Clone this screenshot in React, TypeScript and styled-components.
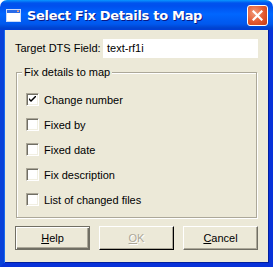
import React from "react";
import styled, { createGlobalStyle } from "styled-components";

const Global = createGlobalStyle`
  html, body { margin: 0; padding: 0; background: #fff; }
  * { box-sizing: border-box; }
`;

const Window = styled.div`
  width: 273px;
  height: 267px;
  display: flex;
  flex-direction: column;
  font-family: "Liberation Sans", Arial, sans-serif;
  font-size: 11px;
  color: #000;
`;

const TitleBar = styled.div`
  height: 30px;
  flex: none;
  display: flex;
  align-items: center;
  padding: 0 5px 0 6px;
  border-radius: 7px 7px 0 0;
  background: linear-gradient(
    to bottom,
    #0997ff 0px,
    #0053ee 3px,
    #0050ee 6px,
    #0066ff 14px,
    #0058ee 24px,
    #0043cf 28px,
    #003dd7 30px
  );
`;

const TitleText = styled.div`
  flex: 1;
  margin-left: 6px;
  color: #fff;
  font-weight: bold;
  font-size: 13px;
  font-family: "DejaVu Sans", sans-serif;
  letter-spacing: -0.3px;
  text-shadow: 1px 1px 0 #0a1883;
`;

const CloseButton = styled.div`
  width: 21px;
  height: 21px;
  border: 1px solid #fff;
  border-radius: 3px;
  background: radial-gradient(circle at 35% 35%, #f29a7a 0%, #e2582f 55%, #c43b14 100%);
  display: flex;
  align-items: center;
  justify-content: center;
`;

const Frame = styled.div`
  flex: 1;
  display: flex;
  flex-direction: column;
  background: #ece9d8;
  border-left: 4px solid #0841d9;
  border-right: 4px solid #0831d9;
  border-bottom: 4px solid #0831d9;
  box-shadow: inset 1px 0 #166aee, inset -1px 0 #001ea0, inset 0 -1px #001ea0;
  padding: 8px 11px 0 11px;
`;

const FieldRow = styled.div`
  display: flex;
  align-items: center;
  height: 20px;
`;

const Label = styled.div`
  width: 88px;
`;

const TextBox = styled.div`
  flex: 1;
  height: 19px;
  background: #fff;
  display: flex;
  align-items: center;
  padding-left: 4px;
`;

const Group = styled.div`
  margin-top: 14px;
  position: relative;
  height: 146px;
  border: 1px solid #aca899;
  box-shadow: inset 1px 1px #fff, 1px 1px #fff;
  margin-left: 1px;
  margin-right: 1px;
  padding: 20px 0 0 9px;
  display: flex;
  flex-direction: column;
  gap: 12px;
`;

const Legend = styled.div`
  position: absolute;
  top: -7px;
  left: 5px;
  padding: 0 2px;
  background: #ece9d8;
  line-height: 13px;
`;

const CheckRow = styled.div`
  display: flex;
  align-items: center;
  height: 13px;
  gap: 5px;
`;

const Box = styled.div`
  width: 13px;
  height: 13px;
  background: #fff;
  border-top: 1px solid #aca899;
  border-left: 1px solid #aca899;
  border-right: 1px solid #fff;
  border-bottom: 1px solid #fff;
  box-shadow: inset 1px 1px #716f64, inset -1px -1px #f1efe2;
  display: flex;
  align-items: center;
  justify-content: center;
`;

const Buttons = styled.div`
  margin-top: 8px;
  display: flex;
  justify-content: space-between;
`;

const Button = styled.div<{ $kind: "focus" | "disabled" | "normal" }>`
  width: 75px;
  height: 24px;
  display: flex;
  align-items: center;
  justify-content: center;
  background: #ece9d8;
  color: ${(p) => (p.$kind === "disabled" ? "#aca899" : "#000")};
  text-shadow: ${(p) => (p.$kind === "disabled" ? "1px 1px 0 #fff" : "none")};
  border-top: 1px solid ${(p) => (p.$kind === "focus" ? "#716f64" : "#fff")};
  border-left: 1px solid ${(p) => (p.$kind === "focus" ? "#716f64" : "#fff")};
  border-right: 1px solid ${(p) => (p.$kind === "disabled" ? "#000" : "#716f64")};
  border-bottom: 1px solid ${(p) => (p.$kind === "disabled" ? "#000" : "#716f64")};
  box-shadow: ${(p) =>
    p.$kind === "focus"
      ? "inset 1px 1px #fff, inset -1px -1px #716f64, inset -2px -2px #aca899"
      : "inset -1px -1px #aca899"};
  u { text-decoration: underline; }
`;

const items = [
  { label: "Change number", checked: true },
  { label: "Fixed by", checked: false },
  { label: "Fixed date", checked: false },
  { label: "Fix description", checked: false },
  { label: "List of changed files", checked: false },
];

export default function App() {
  return (
    <>
      <Global />
      <Window>
        <TitleBar>
          <svg width="15" height="13" viewBox="0 0 15 13">
            <rect x="0.5" y="0.5" width="14" height="12" fill="#fff" stroke="#c8d8f8" />
            <rect x="1" y="1" width="13" height="3" fill="#2a6ce8" />
            <rect x="11" y="1.5" width="2" height="1.5" fill="#f0a080" />
          </svg>
          <TitleText>Select Fix Details to Map</TitleText>
          <CloseButton>
            <svg width="11" height="11" viewBox="0 0 11 11">
              <path d="M1.5 1.5 L9.5 9.5 M9.5 1.5 L1.5 9.5" stroke="#fff" strokeWidth="2.2" strokeLinecap="square" />
            </svg>
          </CloseButton>
        </TitleBar>
        <Frame>
          <FieldRow>
            <Label>Target DTS Field:</Label>
            <TextBox>text-rf1i</TextBox>
          </FieldRow>
          <Group>
            <Legend>Fix details to map</Legend>
            {items.map((it) => (
              <CheckRow key={it.label}>
                <Box>
                  {it.checked && (
                    <svg width="7" height="7" viewBox="0 0 7 7">
                      <path d="M0 2 L0 4 L2 6 L7 1 L7 -1 L2 4 Z" fill="#000" />
                    </svg>
                  )}
                </Box>
                <span>{it.label}</span>
              </CheckRow>
            ))}
          </Group>
          <Buttons>
            <Button $kind="focus"><span><u>H</u>elp</span></Button>
            <Button $kind="disabled"><span><u>O</u>K</span></Button>
            <Button $kind="normal"><span><u>C</u>ancel</span></Button>
          </Buttons>
        </Frame>
      </Window>
    </>
  );
}
